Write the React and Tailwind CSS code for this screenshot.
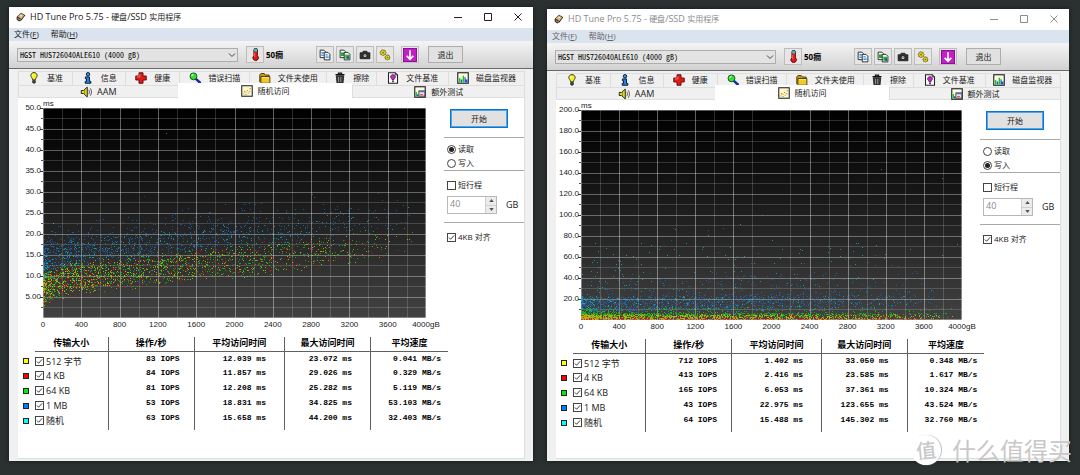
import React from "react";

const SERIES = {
  yellow: "#d8d800",
  red: "#e01010",
  green: "#10d810",
  blue: "#1478d8",
  cyan: "#10c8c8",
};

function rng(seed) {
  let s = seed;
  return () => {
    s = (s * 1664525 + 1013904223) % 4294967296;
    return s / 4294967296;
  };
}

const W = 382;
const H = 210;

function toPath(points) {
  return points
    .map(([x, y]) => `M${Math.round(x)} ${Math.round(H - y)}h1v1h-1z`)
    .join("");
}

function readPoints() {
  const r = rng(7);
  const floor = (t) => 2.8 + 1.6 * Math.min(1, t * 14) + 9.8 * Math.pow(t, 1.05);
  const make = (n, lo, hi) => {
    const out = [];
    for (let i = 0; i < n; i++) {
      const t = Math.pow(r(), 1.5);
      const ms = floor(t) + lo + (hi - lo) * (r() * 0.75 + r() * 0.25);
      if (r() > Math.pow(t, 2.2) * 1.05) out.push([t * W, (ms / 50) * H]);
    }
    return out;
  };
  return {
    blue: [...make(1150, 7, 15.5), ...make(110, 14, 19)],
    cyan: [...make(520, 3, 14), [123, 185.5]],
    green: make(1150, 0.3, 8.6),
    red: [...make(800, 0, 8.6), [101, 122]],
    yellow: [...make(950, 0.2, 8.6), [10, 95]],
  };
}

function writePoints() {
  const r = rng(21);
  const make = (n, fn, pw = 1.4) => {
    const out = [];
    for (let i = 0; i < n; i++) {
      const t = Math.pow(r(), pw);
      const y = Math.max(1, (fn(t) / 200) * H);
      if (r() > Math.pow(t, 3)) out.push([t * W, y]);
    }
    return out;
  };
  return {
    blue: [
      ...make(1250, (t) => 8 + 14 * r() + 10 * t * r()),
      ...make(280, (t) => 18 + 22 * r() + 12 * t * r(), 1.1),
      ...make(60, () => 40 + 65 * r() * r(), 0.6),
    ],
    cyan: [
      ...make(330, () => 1 + 22 * r()),
      ...make(90, () => 22 + 30 * r()),
      ...make(90, () => 52 + 22 * r(), 1),
      [152, 128], [181, 105], [159, 96], [94, 91], [127, 85], [301, 151], [362, 142], [192, 80],
    ],
    green: [...make(1000, () => 2 + 5 * r()), ...make(420, () => 4 + 8 * r())],
    red: make(850, () => 1 + 5 * r() * r()),
    yellow: make(1050, () => 1 + 4.5 * r()),
  };
}

const range = (n) => Array.from({ length: n }, (_, i) => i);

function Plot({ id, points }) {
  return (
    <svg
      className="block h-[210px] w-full overflow-visible"
      viewBox={`0 0 ${W} ${H}`}
      preserveAspectRatio="none"
      shapeRendering="crispEdges"
      role="img"
      aria-label="随机访问"
    >
      <defs>
        <linearGradient id={id} x1="0" y1="0" x2="0" y2="1">
          <stop offset="0" stopColor="#000" />
          <stop offset="0.25" stopColor="#0d0d0d" />
          <stop offset="1" stopColor="#424242" />
        </linearGradient>
      </defs>
      <rect width={W} height={H} fill={`url(#${id})`} />
      {range(10).map((i) => (
        <g key={i}>
          <rect x={i * 38.2 + 19} y="0" width="1" height={H} fill="#fff" opacity="0.17" />
          <rect x="-2" y={i * 21 + 10} width={W + 2} height="1" fill="#fff" opacity="0.17" />
          <rect x="-2" y={i * 21 + 10} width="2" height="1" fill="#555" />
          <rect x="-3" y={i * 21} width="3" height="1" fill="#333" />
        </g>
      ))}
      {range(11).map((i) => (
        <g key={i}>
          <rect x={i === 10 ? W - 1 : i * 38.2} y="0" width="1" height={H} fill="#fff" opacity="0.38" />
          <rect x="0" y={i === 10 ? H - 1 : i * 21} width={W} height="1" fill="#fff" opacity="0.34" />
        </g>
      ))}
      {["blue", "cyan", "green", "red", "yellow"].map((c) => (
        <path key={c} d={toPath(points[c])} fill={SERIES[c]} opacity="0.66" />
      ))}
    </svg>
  );
}

/* ---------- icons ---------- */

const Ico = ({ children, className = "size-[12px]" }) => (
  <svg viewBox="0 0 16 16" className={`${className} shrink-0`} aria-hidden="true">
    {children}
  </svg>
);

const AppIcon = () => (
  <Ico className="size-[10px]">
    <path d="M1 8 8 1l7 4-6 8-4 2-4-3z" fill="#3a2a1a" />
    <path d="M3 7 8 2.500l5 3L8.500 11z" fill="#e8c48a" />
    <circle cx="8" cy="6" r="2" fill="#fff3d8" stroke="#a87a3a" strokeWidth=".7" />
    <path d="m2 9 6 3 0 2-5-2z" fill="#888" />
  </Ico>
);
const Bulb = () => (
  <Ico>
    <path d="M8 .8c-3 0-4.200 2-4.200 4 0 2 2 3.200 2.500 5.700h3.400c.5-2.500 2.500-3.700 2.500-5.700 0-2-1.200-4-4.200-4z" fill="#f8f010" stroke="#333" strokeWidth="1.300" />
    <path d="M6.200 11.500h3.600v2L8.700 15H7.300l-1.100-1.500z" fill="#555" stroke="#111" />
    <path d="M6.500 3v3" stroke="#fff" strokeWidth="1.400" />
  </Ico>
);
const Info = () => (
  <Ico>
    <circle cx="8" cy="3" r="2.300" fill="#2f9af0" stroke="#0a1a3a" strokeWidth="1.300" />
    <path d="M4.500 6.500h5.500v6h1.800V15H4.300v-2.500H6V9H4.500z" fill="#1f84e8" stroke="#0a1a3a" strokeWidth="1.300" />
  </Ico>
);
const Cross = () => (
  <Ico>
    <path d="M5.300 1h5.400v4.300H15v5.400h-4.300V15H5.300v-4.300H1V5.300h4.300z" fill="#e41818" stroke="#5a0a0a" strokeWidth="1.200" />
    <path d="M6.500 3v3.500H2.500" stroke="#ff9a8a" fill="none" />
  </Ico>
);
const Search = () => (
  <Ico>
    <path d="m9.500 9.500 5 4.500" stroke="#1a2aaa" strokeWidth="3.200" strokeLinecap="round" />
    <circle cx="6" cy="5.800" r="4.600" fill="#2fe02f" stroke="#174a17" strokeWidth="1.200" />
    <path d="M3.800 5.500a2.500 2.500 0 0 1 2-2.300" stroke="#d8ffd8" strokeWidth="1.500" fill="none" />
  </Ico>
);
const Folder = () => (
  <Ico>
    <path d="M1 13.500V4l1.500-2H7l1.500 2h5v2" fill="#c89a10" stroke="#4a3a08" strokeWidth="1.200" />
    <path d="M2.500 6h12v9h-12z" fill="#f0c828" stroke="#4a3a08" strokeWidth="1.200" />
    <path d="M4 7.500h9" stroke="#fff2a8" />
  </Ico>
);
const Trash = () => (
  <Ico>
    <path d="M2 3.500h12M6 3V1.500h4V3" stroke="#111" strokeWidth="1.800" fill="none" />
    <path d="M3 5h10l-1 10H4z" fill="#3c3c3c" stroke="#111" />
    <path d="M6 6.500v7M9 6.500v7" stroke="#aaa" />
  </Ico>
);
const FileBench = () => (
  <Ico>
    <path d="M2 1h9l3 3v11H2z" fill="#fff" stroke="#222" strokeWidth="1.400" />
    <path d="M11 1v3h3" fill="none" stroke="#222" />
    <path d="M8 3.500C5.800 3.500 4.800 5 4.800 6.500 4.800 8 6.500 8.500 7 10.500h2c.5-2 2.200-2.500 2.200-4 0-1.500-1-3-3.200-3z" fill="#c828c8" stroke="#4a0a4a" />
    <path d="M7 11.300h2v2.200H7z" fill="#4a0a4a" />
  </Ico>
);
const Monitor = () => (
  <Ico>
    <rect x="1" y="1" width="14" height="14" fill="#fdfde0" stroke="#222" strokeWidth="1.500" />
    <path d="M2.500 14V8h2v6zM7.500 14V5h2v9z" fill="#18c818" />
    <path d="M5 14v-4h2v4zM10 14V7h1.500v3H14v4z" fill="#1a58d8" />
  </Ico>
);
const Speaker = () => (
  <Ico className="h-[12px] w-[13px]">
    <path d="M1 6h3l5-4.500v13L4 10H1z" fill="#e8e020" stroke="#222" strokeWidth="1.300" />
    <path d="M5.500 5.500v5" stroke="#777008" />
    <path d="M11 5c1.200 2 1.200 4 0 6M13 3c2.200 3 2.200 7 0 10" stroke="#333" fill="none" />
  </Ico>
);
const ScatterIcon = () => (
  <Ico>
    <rect x="1" y="1" width="14" height="14" fill="#fdf8d0" stroke="#222" strokeWidth="1.400" />
    <path d="M3 11h1.500v1.500H3zM6 9h1.500v1.500H6zM9 10h1.500v1.500H9z" fill="#e8b010" />
    <path d="M4 8h1.500v1.500H4zM8 6.500h1.500V8H8zM11.500 4H13v1.500h-1.500z" fill="#e87818" />
    <path d="M6 12h1.500v1.500H6zM11 8h1.500v1.500H11z" fill="#58a8e8" />
  </Ico>
);
const ExtraIcon = () => (
  <Ico>
    <rect x="1" y="1" width="14" height="14" fill="#fdfde0" stroke="#222" strokeWidth="1.500" />
    <path d="M2 14V8h2v6z" fill="#18c818" />
    <path d="M4 14v-3h2v3z" fill="#1a58d8" />
    <rect x="6.500" y="6.500" width="8" height="7" fill="#f8d8e8" stroke="#222" />
    <path d="M6.500 7.500h8" stroke="#3878d8" strokeWidth="1.600" />
    <path d="M8 11.500h4" stroke="#d83838" strokeWidth="1.200" />
  </Ico>
);
const Thermo = () => (
  <Ico className="size-[13px]">
    <path d="M6 2.500a2.200 2.200 0 0 1 4.400 0v7a3.400 3.400 0 1 1-4.400 0z" fill="#e01818" stroke="#400" strokeWidth="1" />
    <path d="M6.500 1h3.400v3.500H6.500z" fill="#28c8d0" />
    <path d="M7 6v5" stroke="#ff9a9a" strokeWidth=".8" />
  </Ico>
);
const Copy = ({ pic }) => (
  <Ico>
    <path d="M1.500 1.500h5l2 2v8h-7z" fill="#fff" stroke="#222" strokeWidth="1.200" />
    {pic ? <path d="M2.500 4.500h4.500v5H2.500z" fill="#28a838" /> : <path d="M3 4.500h3.500M3 6.500h3.500M3 8.500h3.500" stroke="#3a90e0" strokeWidth="1.300" />}
    <path d="M7 4.500h5l2.500 2.500v7.500H7z" fill="#fff" stroke="#222" strokeWidth="1.200" />
    {pic ? (
      <>
        <path d="M8.300 7.500h5v5.500h-5z" fill="#28b838" />
        <path d="M10.500 10h3v3h-3z" fill="#185888" />
      </>
    ) : (
      <path d="M8.500 7.500h3M8.500 9.500h4.500M8.500 11.500h4.500" stroke="#3a90e0" strokeWidth="1.300" />
    )}
  </Ico>
);
const Camera = () => (
  <Ico>
    <path d="M1.500 5h3l1-2h5l1 2h3v8h-13z" fill="#333" stroke="#111" />
    <circle cx="8" cy="9" r="2.600" fill="#e8e8e8" stroke="#000" />
    <circle cx="8" cy="9" r="1" fill="#1a8a2a" />
  </Ico>
);
const Gears = () => (
  <Ico>
    <g fill="#e0d020" stroke="#5a5008" strokeWidth=".9">
      <path d="m5 1 1.500.8L8 1.500l.3 1.700L9.500 4.500 8.700 6 8.500 7.700 6.700 7.800 5.200 9 4 7.700 2.200 7.300 2.300 5.600 1.300 4.200 2.800 3.200 3.300 1.500z" />
      <path d="m10.500 7.500 1.300.8 1.500-.1.400 1.500 1.100 1-.7 1.300-.1 1.600-1.600.1L11.200 15l-1.200-1.100-1.600-.4.100-1.500-.9-1.300L9 9.800z" />
    </g>
    <circle cx="5.500" cy="4.700" r="1.200" fill="#7a7010" />
    <circle cx="11.300" cy="11.300" r="1.100" fill="#7a7010" />
  </Ico>
);
const Down = () => (
  <Ico className="size-[14px]">
    <rect x=".5" y=".5" width="15" height="15" fill="#c31fc9" stroke="#7a0a8a" />
    <path d="M8 2.500v10M4.200 9 8 12.800 11.800 9" stroke="#fff" strokeWidth="1.900" fill="none" />
  </Ico>
);

/* ---------- controls ---------- */

function ToolButton({ label, children, className = "" }) {
  return (
    <button
      type="button"
      aria-label={label}
      className={`flex h-[17px] w-[18px] shrink-0 items-center justify-center border border-[#bdbdbd] bg-[#e6e6e6] ${className}`}
    >
      {children}
    </button>
  );
}

function Check({ label, checked }) {
  return (
    <label className="flex items-center gap-[2px]">
      <input type="checkbox" defaultChecked={checked} className="peer sr-only" />
      <span className="flex size-[9px] shrink-0 items-center justify-center border border-[#444] bg-white peer-checked:[&>svg]:block">
        <svg viewBox="0 0 8 8" className="hidden size-[7px]" aria-hidden="true">
          <path d="M1 4l2 2 4-4.500" fill="none" stroke="#222" strokeWidth="1" />
        </svg>
      </span>
      <span className="whitespace-nowrap">{label}</span>
    </label>
  );
}

function Radio({ name, label, checked }) {
  return (
    <label className="flex h-[14px] items-center gap-[2px]">
      <input type="radio" name={name} defaultChecked={checked} className="peer sr-only" />
      <span className="flex size-[9px] shrink-0 items-center justify-center rounded-full border border-[#444] bg-white peer-checked:[&>i]:block">
        <i className="hidden size-[5px] rounded-full bg-[#222]" />
      </span>
      <span>{label}</span>
    </label>
  );
}

const TABS = [
  [Bulb, "基准", "grow-[54]"],
  [Info, "信息", "grow-[53]"],
  [Cross, "健康", "grow-[54]"],
  [Search, "错误扫描", "grow-[70]"],
  [Folder, "文件夹使用", "grow-[77]"],
  [Trash, "擦除", "grow-[50]"],
  [FileBench, "文件基准", "grow-[72]"],
  [Monitor, "磁盘监视器", "grow-[76]"],
];

function Tabs() {
  return (
    <div role="tablist" className="flex flex-col">
      <div className="flex h-[14px] border-t border-l border-[#dedede]">
        {TABS.map(([Icon, label, grow]) => (
          <button
            key={label}
            type="button"
            role="tab"
            aria-selected="false"
            className={`flex basis-0 items-center justify-center gap-[7px] border-r border-[#dedede] pb-[1px] whitespace-nowrap ${grow}`}
          >
            <Icon />
            {label}
          </button>
        ))}
      </div>
      <div className="flex h-[13px] border-l border-[#dedede]">
        <button type="button" role="tab" aria-selected="false" className="flex grow-[159] basis-0 items-center justify-center gap-[4px] border-y border-[#dedede]">
          <Speaker />
          <span className="text-[9px]">AAM</span>
        </button>
        <button type="button" role="tab" aria-selected="true" className="-mt-[2px] flex grow-[175] basis-0 items-center justify-center gap-[5px] bg-white">
          <ScatterIcon />
          随机访问
        </button>
        <button type="button" role="tab" aria-selected="false" className="flex grow-[171] basis-0 items-center justify-center gap-[5px] border border-[#dedede]">
          <ExtraIcon />
          额外测试
        </button>
      </div>
    </div>
  );
}

const ROWS = [
  ["512 字节", "bg-[#ffff00]"],
  ["4 KB", "bg-[#ff0000]"],
  ["64 KB", "bg-[#00ee00]"],
  ["1 MB", "bg-[#0080ff]"],
  ["随机", "bg-[#00ffff]"],
];

const COLS = ["传输大小", "操作/秒", "平均访问时间", "最大访问时间", "平均速度"];

function Results({ data }) {
  return (
    <table className="w-[85%] table-fixed border-collapse leading-[10px]">
      <colgroup>
        <col className="w-[17px]" />
        <col className="w-[17%]" />
        <col className="w-[20%]" />
        <col className="w-[21%]" />
        <col className="w-[20%]" />
        <col />
      </colgroup>
      <thead>
        <tr className="h-[14px]">
          <td />
          {COLS.map((c, i) => (
            <th
              key={c}
              scope="col"
              className={`border-b border-[#606060] p-0 pb-[2px] text-[9px] font-bold whitespace-nowrap text-black ${i < 4 ? "border-r" : ""}`}
            >
              {c}
            </th>
          ))}
        </tr>
      </thead>
      <tbody>
        {ROWS.map(([label, color], r) => (
          <tr key={label} className={`align-top ${r === 4 ? "h-[19px]" : "h-[15px]"}`}>
            <td className="p-0 pt-[7px] pl-[5px]">
              <span className={`block size-[6px] border border-[#222] ${color}`} />
            </td>
            <th scope="row" className="border-r border-[#606060] p-0 pt-[5px] text-left text-[9px] leading-[9px] font-normal">
              <Check label={label} checked />
            </th>
            {data[r].map((v, i) => (
              <td
                key={i}
                className={`border-[#606060] p-0 pt-[2px] text-right font-['Liberation_Mono',monospace] text-[8px] font-bold whitespace-pre text-black ${
                  i === 0 ? "border-r pr-[14px]" : i === 1 || i === 2 ? "border-r pr-[18px]" : "pr-[7px]"
                }`}
              >
                {v}
              </td>
            ))}
          </tr>
        ))}
      </tbody>
    </table>
  );
}

const X_LABELS = ["0", "400", "800", "1200", "1600", "2000", "2400", "2800", "3200", "3600", "4000gB"];

function HdTune({ id, active, mode, yLabels, points, data }) {
  return (
    <section className="flex min-w-0 flex-1 flex-col bg-[#f0f0f0] text-[8px] leading-[10px] text-[#1a1a1a] shadow-[0_0_5px_#00000088]">
      <header className={`flex h-[21px] shrink-0 items-center bg-white px-[7px] pb-[1px] ${active ? "text-[#222]" : "text-[#8c8c8c]"}`}>
        <AppIcon />
        <h1 className="ml-[4px] flex-1 text-[9px] whitespace-nowrap">
          HD Tune Pro 5.75 - <span className="text-[8px]">硬盘</span>/SSD <span className="text-[8px]">实用程序</span>
        </h1>
        <div className="flex gap-[22px] pr-[4px]">
          <button type="button" aria-label="最小化">
            <svg viewBox="0 0 8 8" className="size-[8px]"><path d="M0 4.500h8" stroke="currentColor" /></svg>
          </button>
          <button type="button" aria-label="最大化">
            <svg viewBox="0 0 8 8" className="size-[8px]"><path d="M.5.5h7v7h-7z" fill="none" stroke="currentColor" /></svg>
          </button>
          <button type="button" aria-label="关闭">
            <svg viewBox="0 0 8 8" className="size-[8px]"><path d="M.5.5l7 7M7.500.5l-7 7" stroke="currentColor" /></svg>
          </button>
        </div>
      </header>

      <nav className={`flex h-[13px] shrink-0 items-center gap-[12px] bg-[#dbe3ee] px-[5px] pb-[1px] ${active ? "text-[#222]" : "text-[#666]"}`}>
        <button type="button">文件(<u>F</u>)</button>
        <button type="button">帮助(<u>H</u>)</button>
      </nav>

      <div className="flex h-[28px] shrink-0 items-center border-b border-[#6a6a6a] bg-linear-to-b from-[#f4f4f4] to-[#d2d2d2] px-[8px]">
        <div className="relative w-[221px]">
          <select
            aria-label="硬盘"
            className="block h-[14px] w-full appearance-none border border-[#adadad] bg-[#e3e3e3] px-[2px] font-['Noto_Sans_Mono_CJK_SC','Liberation_Mono',monospace] text-[8px] leading-[12px] font-medium text-black"
          >
            <option>HGST HUS726040ALE610 (4000 gB)</option>
          </select>
          <svg viewBox="0 0 8 8" className="pointer-events-none absolute top-[3px] right-[2px] size-[8px]" aria-hidden="true">
            <path d="M1 2.500l3 3 3-3" fill="none" stroke="#444" />
          </svg>
        </div>
        <ToolButton label="温度" className="ml-[8px]"><Thermo /></ToolButton>
        <span className="ml-[2px] w-[50px] font-bold text-black">50癇</span>
        <div className="flex gap-[2px]">
          <ToolButton label="复制文本"><Copy /></ToolButton>
          <ToolButton label="复制图像"><Copy pic /></ToolButton>
          <ToolButton label="截图"><Camera /></ToolButton>
          <ToolButton label="设置"><Gears /></ToolButton>
        </div>
        <ToolButton label="保存" className="ml-[7px]"><Down /></ToolButton>
        <button type="button" className="ml-[9px] h-[17px] w-[35px] border border-[#adadad] bg-[#e1e1e1]">退出</button>
      </div>

      <div className="flex flex-1 flex-col pt-[2px] pr-[8px] pb-[2px] pl-[9px]">
        <Tabs />
        <div role="tabpanel" className="flex-1 border-r border-b border-[#dedede] bg-white">
          <div className="flex">
            <ol className="mt-[5px] w-[25px] shrink-0 pr-[2px] text-right font-['Liberation_Sans',sans-serif]">
              {yLabels.map((y) => (
                <li key={y} className="h-[21px]">{y}</li>
              ))}
            </ol>
            <div className="min-w-0 flex-1">
              <div className="flex h-[10px] items-end font-['Liberation_Sans',sans-serif] leading-[9px]">ms</div>
              <Plot id={id} points={points} />
              <ol className="flex h-[14px] items-center justify-between font-['Liberation_Sans',sans-serif]">
                {X_LABELS.map((x) => (
                  <li key={x} className="flex w-0 justify-center whitespace-nowrap">{x}</li>
                ))}
              </ol>
            </div>
            <div className="ml-[18px] w-[80px] shrink-0">
              <button type="button" className="mt-[11px] ml-[6px] block h-[19px] w-[58px] border border-[#0078d7] bg-[#e1e1e1] ring-1 ring-[#0078d7]/60 ring-inset">
                开始
              </button>
              <div className="mt-[9px] border-t border-[#a8a8a8] pt-[4px] pl-[3px]">
                <Radio name={`${id}-mode`} label="读取" checked={mode === "read"} />
                <Radio name={`${id}-mode`} label="写入" checked={mode === "write"} />
              </div>
              <div className="border-t border-[#a8a8a8] pt-[9px] pl-[3px]">
                <Check label="短行程" />
                <div className="mt-[6px] flex items-center">
                  <div className="flex h-[18px] w-[50px] border border-[#b8b8b8] bg-white">
                    <input type="text" aria-label="短行程大小" defaultValue="40" disabled className="w-full min-w-0 flex-1 px-[2px] pb-[2px] text-[9px] text-[#8a8a8a]" />
                    <div className="flex w-[11px] flex-col border-l border-[#d0d0d0] bg-[#ececec]">
                      <button type="button" aria-label="增加" disabled className="flex flex-1 items-center justify-center border-b border-[#d0d0d0]">
                        <svg viewBox="0 0 6 4" className="h-[3px] w-[5px]"><path d="M3 0l3 4H0z" fill="#555" /></svg>
                      </button>
                      <button type="button" aria-label="减少" disabled className="flex flex-1 items-center justify-center">
                        <svg viewBox="0 0 6 4" className="h-[3px] w-[5px]"><path d="M3 4l3-4H0z" fill="#555" /></svg>
                      </button>
                    </div>
                  </div>
                  <span className="ml-[9px] text-[9px]">GB</span>
                </div>
              </div>
              <div className="mt-[8px] border-t border-[#a8a8a8] pt-[9px] pl-[3px]">
                <Check label="4KB 对齐" checked />
              </div>
            </div>
          </div>
          <div className="pt-[5px]">
            <Results data={data} />
          </div>
        </div>
      </div>
    </section>
  );
}

const READ = [
  ["83 IOPS", "12.039 ms", "23.072 ms", "0.041 MB/s"],
  ["84 IOPS", "11.857 ms", "29.026 ms", "0.329 MB/s"],
  ["81 IOPS", "12.208 ms", "25.282 ms", "5.119 MB/s"],
  ["53 IOPS", "18.831 ms", "34.825 ms", "53.103 MB/s"],
  ["63 IOPS", "15.658 ms", "44.200 ms", "32.403 MB/s"],
];
const WRITE = [
  ["712 IOPS", "1.402 ms", "33.050 ms", "0.348 MB/s"],
  ["413 IOPS", "2.416 ms", "23.585 ms", "1.617 MB/s"],
  ["165 IOPS", "6.053 ms", "37.361 ms", "10.324 MB/s"],
  ["43 IOPS", "22.975 ms", "123.655 ms", "43.524 MB/s"],
  ["64 IOPS", "15.488 ms", "145.302 ms", "32.760 MB/s"],
];

const READ_Y = ["50.0", "45.0", "40.0", "35.0", "30.0", "25.0", "20.0", "15.0", "10.0", "5.00"];
const WRITE_Y = ["200.0", "180.0", "160.0", "140.0", "120.0", "100.0", "80.0", "60.0", "40.0", "20.0"];

const READ_POINTS = readPoints();
const WRITE_POINTS = writePoints();

export default function App() {
  return (
    <main
      lang="zh-CN"
      className="relative flex min-h-screen gap-[14px] bg-[#2b3131] pr-[11px] pb-[14px] pl-[9px] font-['Open_Sans','Noto_Sans_CJK_SC',sans-serif]"
    >
      <div className="flex min-w-0 grow-[524] basis-0 pt-[7px]">
        <HdTune id="read" active mode="read" yLabels={READ_Y} points={READ_POINTS} data={READ} />
      </div>
      <div className="flex min-w-0 grow-[522] basis-0 pt-[9px]">
        <HdTune id="write" mode="write" yLabels={WRITE_Y} points={WRITE_POINTS} data={WRITE} />
      </div>
      <div className="pointer-events-none absolute right-[8px] bottom-[10px] flex items-center gap-[11px] font-['Noto_Sans_CJK_SC',sans-serif] text-[#c8c8c8]">
        <span className="flex size-[30px] -rotate-6 items-center justify-center rounded-full bg-white text-[20px] leading-none font-medium shadow-[1px_0_1px_#bbb]">
          值
        </span>
        <span className="text-[24px] leading-[30px]">什么值得买</span>
      </div>
    </main>
  );
}
